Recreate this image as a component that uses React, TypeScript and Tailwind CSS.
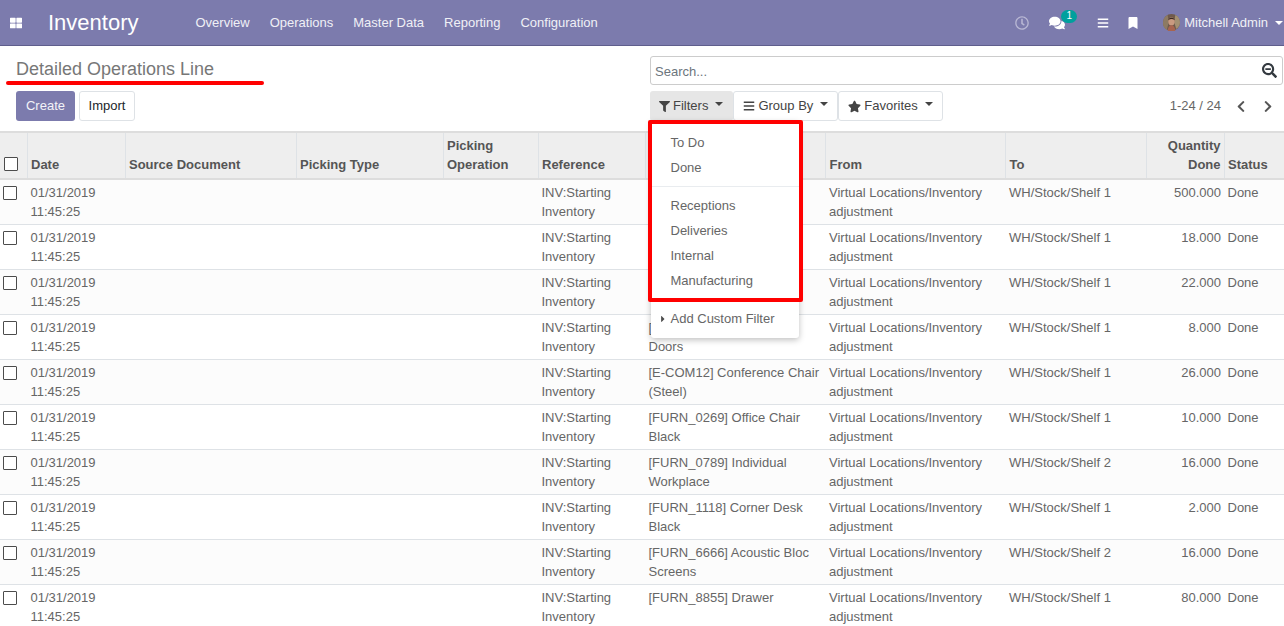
import type { ReactElement } from "react";
import {
  FaBars,
  FaBookmark,
  FaCaretRight,
  FaChevronLeft,
  FaChevronRight,
  FaComments,
  FaFilter,
  FaRegClock,
  FaSearchMinus,
  FaStar,
  FaThLarge
} from "react-icons/fa";

type Row = {
  product: string;
  to: string;
  qty: string;
};

const navItems = ["Overview", "Operations", "Master Data", "Reporting", "Configuration"];

const rows: Row[] = [
  { product: "", to: "WH/Stock/Shelf 1", qty: "500.000" },
  { product: "", to: "WH/Stock/Shelf 1", qty: "18.000" },
  { product: "", to: "WH/Stock/Shelf 1", qty: "22.000" },
  { product: "[E-COM11] Cabinet with Doors", to: "WH/Stock/Shelf 1", qty: "8.000" },
  { product: "[E-COM12] Conference Chair (Steel)", to: "WH/Stock/Shelf 1", qty: "26.000" },
  { product: "[FURN_0269] Office Chair Black", to: "WH/Stock/Shelf 1", qty: "10.000" },
  { product: "[FURN_0789] Individual Workplace", to: "WH/Stock/Shelf 2", qty: "16.000" },
  { product: "[FURN_1118] Corner Desk Black", to: "WH/Stock/Shelf 1", qty: "2.000" },
  { product: "[FURN_6666] Acoustic Bloc Screens", to: "WH/Stock/Shelf 2", qty: "16.000" },
  { product: "[FURN_8855] Drawer", to: "WH/Stock/Shelf 1", qty: "80.000" }
];

function Caret(): ReactElement {
  return <span className="h-0 w-0 border-x-[4px] border-t-[4px] border-x-transparent border-t-current" />;
}

function Avatar(): ReactElement {
  return (
    <svg width="17" height="17" viewBox="0 0 18 18" className="shrink-0">
      <circle cx="9" cy="9" r="9" fill="#6f5a4c" />
      <path d="M0 9a9 9 0 0 1 5-8l1 8-2 8a9 9 0 0 1-4-8z" fill="#8d7a63" />
      <path d="M13 1a9 9 0 0 1 5 8 9 9 0 0 1-4 7l-2-7z" fill="#a39072" />
      <ellipse cx="9" cy="8" rx="3.4" ry="4.2" fill="#c99a80" />
      <path d="M5.5 6.5C6 3 12 3 12.5 6.5 10 5 8 5 5.5 6.5z" fill="#3b2a22" />
      <path d="M5 18c0-4 2-6 4-6s4 2 4 6z" fill="#a8644f" />
    </svg>
  );
}

function Navbar(): ReactElement {
  return (
    <header className="flex h-[46px] items-center border-b border-[#5f5e8c] bg-[#7c7bad] text-[13px] text-white">
      <FaThLarge className="ml-[10px] h-[12px] w-[12px]" />
      <span className="ml-[26px] text-[22px] leading-none">Inventory</span>
      <nav className="ml-[57px] flex gap-[20px] text-[#f0f0f6]">
        {navItems.map((item) => (
          <span key={item}>{item}</span>
        ))}
      </nav>
      <div className="ml-auto flex items-center">
        <FaRegClock className="h-[14px] w-[14px] text-[#b9b8d4]" />
        <div className="relative ml-[20px]">
          <FaComments className="h-[16px] w-[16px]" />
          <span className="absolute left-[12px] top-[-5px] flex h-[13px] w-[16px] items-center justify-center rounded-[7px] bg-[#00a09d] text-[10px] leading-none">
            1
          </span>
        </div>
        <FaBars className="ml-[32px] h-[12px] w-[12px]" />
        <FaBookmark className="ml-[19px] h-[12px] w-[10px]" />
        <div className="ml-[25px]">
          <Avatar />
        </div>
        <span className="ml-[4px] text-[#f0f0f6]">Mitchell Admin</span>
        <span className="ml-[7px] mr-[1px] flex text-white">
          <Caret />
        </span>
      </div>
    </header>
  );
}

function ToolButton({
  icon,
  label,
  active
}: {
  icon: ReactElement;
  label: string;
  active?: boolean;
}): ReactElement {
  return (
    <button
      type="button"
      className={
        active
          ? "flex h-[30px] items-center rounded-[3px] bg-[#e6e6e6] pl-[9px] pr-[10px] text-[13px] text-[#444444]"
          : "flex h-[30px] items-center rounded-[3px] border border-[#dee2e6] bg-white px-[9px] text-[13px] text-[#444444]"
      }
    >
      {icon}
      <span className="ml-[3px]">{label}</span>
      <span className="ml-[7px] flex -translate-y-[2px]">
        <Caret />
      </span>
    </button>
  );
}

function ControlPanel(): ReactElement {
  return (
    <section className="flex h-[85px]">
      <div className="w-[650px] pl-[16px]">
        <h1 className="mt-[12px] h-[22px] text-[18px] leading-[22px] text-[#777777]">
          Detailed Operations Line
        </h1>
        <div className="mt-[11px] flex gap-[4px] text-[13px]">
          <button type="button" className="h-[30px] w-[59px] rounded-[3px] bg-[#7c7bad] text-[#f3f3f8]">
            Create
          </button>
          <button
            type="button"
            className="h-[30px] w-[56px] rounded-[3px] border border-[#dee2e6] bg-white text-[#212529]"
          >
            Import
          </button>
        </div>
      </div>
      <div className="w-[633px] pt-[10px]">
        <div className="flex h-[29px] items-center rounded-[3px] border border-[#cccccc] pl-[4px] pr-[5px] text-[13px] text-[#6c757d]">
          <span className="pt-[2px]">Search...</span>
          <FaSearchMinus className="ml-auto h-[15px] w-[15px] text-[#343a40]" />
        </div>
        <div className="mt-[6px] flex items-center text-[13px]">
          <ToolButton active label="Filters" icon={<FaFilter className="h-[11px] w-[11px]" />} />
          <ToolButton label="Group By" icon={<FaBars className="h-[12px] w-[12px]" />} />
          <ToolButton label="Favorites" icon={<FaStar className="h-[13px] w-[13px]" />} />
          <span className="ml-auto text-[#666666]">1-24 / 24</span>
          <FaChevronLeft className="ml-[14px] h-[13px] w-[12px] text-[#555555]" />
          <FaChevronRight className="ml-[15px] mr-[9px] h-[13px] w-[12px] text-[#555555]" />
        </div>
      </div>
    </section>
  );
}

function Checkbox(): ReactElement {
  return <div className="h-[14px] w-[14px] rounded-[1px] border border-[#4c4c4c] bg-white" />;
}

function DataTable(): ReactElement {
  const th = "border-l border-[#dee2e6] px-[3.5px] pb-[4px] align-bottom font-bold leading-[19px]";
  const td = "px-[3.5px] py-[3px]";

  return (
    <table className="w-[1284px] table-fixed border-collapse text-left text-[13px] text-[#666666]">
      <colgroup>
        <col className="w-[27px]" />
        <col className="w-[98px]" />
        <col className="w-[171px]" />
        <col className="w-[147px]" />
        <col className="w-[95px]" />
        <col className="w-[107px]" />
        <col className="w-[180.5px]" />
        <col className="w-[180px]" />
        <col className="w-[140.5px]" />
        <col className="w-[78px]" />
        <col className="w-[60px]" />
      </colgroup>
      <thead>
        <tr className="h-[47px] border-t-2 border-b-2 border-[#dddddd] bg-[#eeeeee] text-[#555555]">
          <th className="pb-[7px] pl-[4px] align-bottom">
            <Checkbox />
          </th>
          <th className={th}>Date</th>
          <th className={th}>Source Document</th>
          <th className={th}>Picking Type</th>
          <th className={th}>
            Picking
            <br />
            Operation
          </th>
          <th className={th}>Reference</th>
          <th className={th}>Product</th>
          <th className={th}>From</th>
          <th className={th}>To</th>
          <th className={`${th} pr-[3px] text-right`}>
            Quantity
            <br />
            Done
          </th>
          <th className={th}>Status</th>
        </tr>
      </thead>
      <tbody className="leading-[19px]">
        {rows.map((row, index) => (
          <tr
            key={index}
            className={`h-[45px] border-t border-[#dee2e6] align-top ${index % 2 === 0 ? "bg-[#fcfcfc]" : "bg-white"}`}
          >
            <td className="pl-[3px] pt-[6px]">
              <Checkbox />
            </td>
            <td className={td}>
              01/31/2019
              <br />
              11:45:25
            </td>
            <td />
            <td />
            <td />
            <td className={td}>
              INV:Starting
              <br />
              Inventory
            </td>
            <td className={td}>{row.product}</td>
            <td className={td}>
              Virtual Locations/Inventory
              <br />
              adjustment
            </td>
            <td className={td}>{row.to}</td>
            <td className="px-[3px] py-[3px] text-right">{row.qty}</td>
            <td className={td}>Done</td>
          </tr>
        ))}
      </tbody>
    </table>
  );
}

function FiltersMenu(): ReactElement {
  const item = "flex h-[25px] items-center pl-[19.5px]";

  return (
    <div className="absolute left-[651px] top-[121px] w-[148px] rounded-b-[3px] bg-white pb-[7px] pt-[9px] text-[13px] text-[#666666] shadow-[0_2px_6px_rgba(0,0,0,0.25)]">
      <div className={item}>To Do</div>
      <div className={item}>Done</div>
      <div className="my-[6px] border-t border-[#e9ecef]" />
      <div className={item}>Receptions</div>
      <div className={item}>Deliveries</div>
      <div className={item}>Internal</div>
      <div className={item}>Manufacturing</div>
      <div className="my-[6px] border-t border-[#e9ecef]" />
      <div className={`${item} relative`}>
        <FaCaretRight className="absolute left-[9px] h-[10px] w-[6px] text-[#4c4c4c]" />
        Add Custom Filter
      </div>
    </div>
  );
}

export default function App(): ReactElement {
  return (
    <div className="relative h-[626px] w-[1284px] overflow-hidden bg-white font-['Liberation_Sans',Arial,sans-serif]">
      <Navbar />
      <ControlPanel />
      <DataTable />
      <FiltersMenu />
      {/* red annotations drawn over the screenshot */}
      <div className="absolute left-[6px] top-[81px] h-[4px] w-[258px] rounded-full bg-[#ff0000]" />
      <div className="absolute left-[648px] top-[120px] h-[182px] w-[155px] rounded-[2px] border-[4px] border-[#ff0000]" />
    </div>
  );
}
